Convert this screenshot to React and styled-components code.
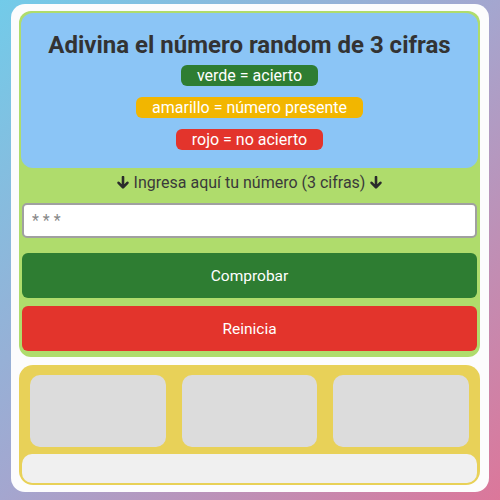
import React, { useState } from 'react';
import styled, { createGlobalStyle } from 'styled-components';

const GlobalStyle = createGlobalStyle`
  html, body {
    margin: 0;
    padding: 0;
  }
  body {
    width: 500px;
    height: 500px;
    background: linear-gradient(135deg, #72cbe9 0%, #a4a6cf 50%, #dc779a 100%);
    font-family: Roboto, "Liberation Sans", sans-serif;
    overflow: hidden;
  }
`;

const DownArrow = () => (
  <Arrow viewBox='0 0 12 14'>
    <path d='M6 1v10M1.6 6.8L6 11.4 10.4 6.8' fill='none' stroke='#2b2b2b' strokeWidth='2.6' strokeLinecap='round' strokeLinejoin='round' />
  </Arrow>
);

const App = () => {
  const [guess, setGuess] = useState('');

  return (
    <Page>
      <GlobalStyle />
      <Card>
        <GamePanel>
          <InfoBox>
            <Title>Adivina el número random de 3 cifras</Title>
            <Legend>
              <Badge color='#2e7d32'>verde = acierto</Badge>
              <Badge color='#f2b600'>amarillo = número presente</Badge>
              <Badge color='#e3342c'>rojo = no acierto</Badge>
            </Legend>
          </InfoBox>
          <Hint>
            <DownArrow /> Ingresa aquí tu número (3 cifras) <DownArrow />
          </Hint>
          <GuessInput
            type='text'
            placeholder='* * *'
            maxLength={3}
            value={guess}
            onChange={(e) => setGuess(e.target.value)}
          />
          <ActionBtn color='#2e7d32'>Comprobar</ActionBtn>
          <ActionBtn color='#e3342c'>Reinicia</ActionBtn>
        </GamePanel>
        <ResultPanel>
          <Slots>
            <Slot />
            <Slot />
            <Slot />
          </Slots>
          <Message />
        </ResultPanel>
      </Card>
    </Page>
  );
};

const Page = styled.div`
  padding: 4px 11px 8px 11px;
  box-sizing: border-box;
  height: 500px;
`;

const Card = styled.div`
  background: #fcfcfd;
  border-radius: 14px;
  height: 488px;
  box-sizing: border-box;
  padding: 7px 9px 7px 8px;
  display: flex;
  flex-direction: column;
  gap: 8px;
`;

const GamePanel = styled.div`
  background: #afdc6c;
  border-radius: 12px;
  padding: 2px 2px 6px;
  display: flex;
  flex-direction: column;
`;

const InfoBox = styled.div`
  background: #8bc5f6;
  border-radius: 12px;
  padding: 19px 10px 18px;
  display: flex;
  flex-direction: column;
  align-items: center;
`;

const Title = styled.h1`
  margin: 0;
  font-family: Roboto, "Liberation Sans", sans-serif;
  font-size: 24px;
  line-height: 26px;
  font-weight: 700;
  color: #333;
  white-space: nowrap;
`;

const Legend = styled.div`
  margin-top: 7px;
  display: flex;
  flex-direction: column;
  align-items: center;
  gap: 11px;
`;

const Badge = styled.span`
  background: ${(p) => p.color};
  color: #fff;
  font-size: 16px;
  line-height: 21px;
  height: 21px;
  padding: 0 16px;
  border-radius: 6px;
`;

const Hint = styled.div`
  display: flex;
  align-items: center;
  justify-content: center;
  gap: 5px;
  font-size: 16px;
  color: #3a3a3a;
  line-height: 20px;
  margin: 5px 0 10px;
`;

const Arrow = styled.svg`
  width: 12px;
  height: 14px;
`;

const GuessInput = styled.input`
  margin: 0 1px;
  height: 35px;
  box-sizing: border-box;
  border: 2px solid #a0a0a0;
  border-radius: 5px;
  background: #fff;
  padding: 0 8px;
  font-family: Roboto, "Liberation Sans", sans-serif;
  font-size: 16px;
  outline: none;
  &::placeholder {
    color: #888;
  }
`;

const ActionBtn = styled.button`
  margin: 15px 1px 0;
  & + & {
    margin-top: 8px;
  }
  height: 45px;
  border: 0;
  border-radius: 6px;
  background: ${(p) => p.color};
  color: #fff;
  font-family: Roboto, "Liberation Sans", sans-serif;
  font-size: 15.5px;
  font-weight: 400;
  cursor: pointer;
`;

const ResultPanel = styled.div`
  background: #e8d158;
  border-radius: 14px;
  padding: 10px 3px 2px;
  display: flex;
  flex-direction: column;
  gap: 7px;
`;

const Slots = styled.div`
  display: grid;
  grid-template-columns: repeat(3, 1fr);
  gap: 16px;
  padding: 0 8px;
`;

const Slot = styled.div`
  height: 72px;
  background: #dcdcdc;
  border-radius: 10px;
`;

const Message = styled.div`
  height: 29px;
  background: #f0f0f0;
  border-radius: 10px;
`;

export default App;
